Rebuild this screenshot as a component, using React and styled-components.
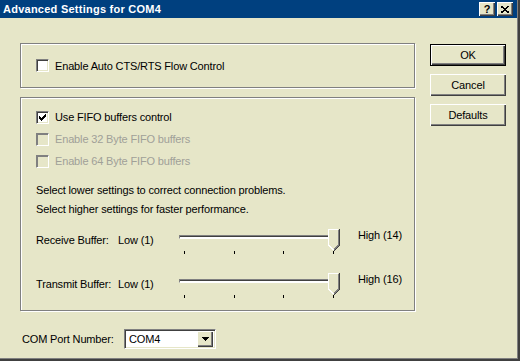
import React from "react";
import styled, { createGlobalStyle } from "styled-components";

const colors = {
  face: "#e6e6c8",
  title: "#00407f",
  shadow: "#808080",
  dark: "#404040",
  light: "#ffffff",
  text: "#000000",
  disabled: "#a0a098",
};

const GlobalStyle = createGlobalStyle`
  html, body {
    margin: 0;
    padding: 0;
    background: ${colors.face};
  }
  body {
    font-family: "Liberation Sans", Arial, sans-serif;
    font-size: 11px;
    letter-spacing: -0.15px;
    color: ${colors.text};
  }
`;

const Window = styled.div`
  width: 520px;
  height: 361px;
  box-sizing: border-box;
  background: ${colors.face};
  box-shadow: inset -2px -2px ${colors.dark}, inset -3px -3px ${colors.shadow};
  display: flex;
  flex-direction: column;
`;

const TitleBar = styled.div`
  height: 18px;
  margin-right: 3px;
  background: ${colors.title};
  display: flex;
  align-items: center;
  justify-content: space-between;
  padding: 0 4px 0 3px;
`;

const TitleText = styled.span`
  color: #fff;
  font-weight: bold;
  font-size: 11px;
  letter-spacing: 0.25px;
`;

const TitleButtons = styled.div`
  display: flex;
  gap: 2px;
`;

const TitleButton = styled.div`
  width: 16px;
  height: 14px;
  box-sizing: border-box;
  background: ${colors.face};
  box-shadow: inset 1px 1px ${colors.light}, inset -1px -1px ${colors.dark},
    inset -2px -2px ${colors.shadow};
  display: flex;
  align-items: center;
  justify-content: center;
  font-weight: bold;
  font-size: 11px;
  line-height: 1;
`;

const Body = styled.div`
  display: flex;
  padding: 25px 0 0 20px;
  gap: 15px;
`;

const LeftColumn = styled.div`
  width: 395px;
  display: flex;
  flex-direction: column;
`;

const Group = styled.div`
  box-sizing: border-box;
  border: 1px solid ${colors.shadow};
  box-shadow: inset 1px 1px ${colors.light}, 1px 1px ${colors.light};
  height: ${(p) => p.$height}px;
  margin-top: ${(p) => p.$top || 0}px;
  padding: ${(p) => p.$pad || "0 0 0 15px"};
  display: flex;
  flex-direction: column;
  justify-content: ${(p) => (p.$center ? "center" : "flex-start")};
`;

const CheckRow = styled.label`
  height: 22px;
  display: flex;
  align-items: center;
  gap: 6px;
  color: ${(p) => (p.$disabled ? colors.disabled : colors.text)};
`;

const Box = styled.span`
  width: 13px;
  height: 13px;
  box-sizing: border-box;
  background: ${(p) => (p.$disabled ? colors.face : "#fff")};
  border-top: 1px solid ${colors.shadow};
  border-left: 1px solid ${colors.shadow};
  border-right: 1px solid ${colors.light};
  border-bottom: 1px solid ${colors.light};
  box-shadow: inset 1px 1px ${(p) => (p.$disabled ? colors.shadow : colors.dark)},
    inset -1px -1px ${colors.face};
  display: flex;
  align-items: center;
  justify-content: center;
`;

const Hint = styled.div`
  line-height: 19px;
  margin-top: ${(p) => p.$top || 0}px;
`;

const SliderRow = styled.div`
  height: 30px;
  display: flex;
  align-items: flex-start;
  margin-top: ${(p) => p.$top}px;
`;

const SliderLabel = styled.span`
  width: ${(p) => p.$width}px;
  padding-top: 5px;
  line-height: 13px;
  white-space: nowrap;
`;

const HighLabel = styled.span`
  margin-left: 18px;
  line-height: 13px;
  white-space: nowrap;
`;

const SliderBox = styled.div`
  position: relative;
  width: 162px;
  height: 27px;
`;

const Track = styled.div`
  margin: 6px 3px 0 1px;
  height: 4px;
  box-sizing: border-box;
  border-top: 1px solid ${colors.shadow};
  border-left: 1px solid ${colors.shadow};
  border-bottom: 1px solid ${colors.light};
  border-right: 1px solid ${colors.light};
  background: ${colors.light};
  box-shadow: inset 0 1px ${colors.dark};
`;

const Thumb = styled.svg`
  position: absolute;
  right: 0;
  top: 0;
`;

const Ticks = styled.div`
  display: flex;
  justify-content: space-between;
  padding: 0 6px 0 6px;
  margin-top: 12px;
`;

const Tick = styled.span`
  width: 1px;
  height: 3px;
  background: ${colors.text};
`;

const PortRow = styled.div`
  display: flex;
  align-items: center;
  margin-top: 18px;
  padding-left: 2px;
`;

const PortLabel = styled.span`
  width: 102px;
`;

const Select = styled.div`
  width: 92px;
  height: 20px;
  box-sizing: border-box;
  background: #fff;
  border-top: 1px solid ${colors.shadow};
  border-left: 1px solid ${colors.shadow};
  border-right: 1px solid ${colors.light};
  border-bottom: 1px solid ${colors.light};
  box-shadow: inset 1px 1px ${colors.dark}, inset -1px -1px ${colors.face};
  display: flex;
  align-items: center;
  justify-content: space-between;
  padding: 0 2px 0 4px;
`;

const DropButton = styled.div`
  width: 16px;
  height: 16px;
  box-sizing: border-box;
  background: ${colors.face};
  box-shadow: inset 1px 1px ${colors.light}, inset -1px -1px ${colors.dark},
    inset -2px -2px ${colors.shadow};
  display: flex;
  align-items: center;
  justify-content: center;
`;

const RightColumn = styled.div`
  display: flex;
  flex-direction: column;
  gap: 8px;
  padding-top: 1px;
`;

const Button = styled.button`
  width: 76px;
  height: 22px;
  box-sizing: border-box;
  background: ${colors.face};
  font-family: inherit;
  font-size: 11px;
  letter-spacing: inherit;
  color: ${colors.text};
  padding: 0;
  border: ${(p) => (p.$default ? `1px solid ${colors.text}` : "none")};
  box-shadow: inset 1px 1px ${colors.light}, inset -1px -1px ${colors.dark},
    inset -2px -2px ${colors.shadow};
`;

const CheckMark = () => (
  <svg width="7" height="7" shapeRendering="crispEdges">
    <path d="M0 2h1v1h1v1h1V3h1V2h1V1h1V0h1v3h-1v1h-1v1h-1v1h-1v1H2V6H1V5H0z" fill="#000" />
  </svg>
);

const Check = ({ checked, disabled, children }) => (
  <CheckRow $disabled={disabled}>
    <Box $disabled={disabled}>{checked && <CheckMark />}</Box>
    {children}
  </CheckRow>
);

const ThumbShape = () => (
  <Thumb width="12" height="22" shapeRendering="crispEdges">
    <polygon points="0,0 11,0 11,16 6,21 5,21 0,16" fill={colors.face} />
    <polyline points="0.5,16 0.5,0.5 10,0.5" stroke={colors.light} fill="none" />
    <polyline points="10.5,1 10.5,16 5.5,21" stroke={colors.shadow} fill="none" />
    <polyline points="11.5,0 11.5,16.5 6,22" stroke={colors.dark} fill="none" />
    <polyline points="0.5,16 5.5,21" stroke={colors.light} fill="none" />
  </Thumb>
);

const Slider = () => (
  <SliderBox>
    <Track />
    <ThumbShape />
    <Ticks>
      <Tick />
      <Tick />
      <Tick />
      <Tick />
    </Ticks>
  </SliderBox>
);

const BufferRow = ({ label, high, top }) => (
  <SliderRow $top={top}>
    <SliderLabel $width={82}>{label}</SliderLabel>
    <SliderLabel $width={60}>Low (1)</SliderLabel>
    <Slider />
    <HighLabel>{high}</HighLabel>
  </SliderRow>
);

const App = () => {
  return (
    <Window>
      <GlobalStyle />
      <TitleBar>
        <TitleText>Advanced Settings for COM4</TitleText>
        <TitleButtons>
          <TitleButton>?</TitleButton>
          <TitleButton>
            <svg width="8" height="7" shapeRendering="crispEdges">
              <path d="M0 0l8 7M8 0l-8 7" stroke="#000" strokeWidth="1.6" />
            </svg>
          </TitleButton>
        </TitleButtons>
      </TitleBar>

      <Body>
        <LeftColumn>
          <Group $height={45} $center>
            <Check>Enable Auto CTS/RTS Flow Control</Check>
          </Group>

          <Group $height={214} $top={9} $pad="8px 0 0 15px">
            <Check checked>Use FIFO buffers control</Check>
            <Check disabled>Enable 32 Byte FIFO buffers</Check>
            <Check disabled>Enable 64 Byte FIFO buffers</Check>
            <Hint $top={9}>Select lower settings to correct connection problems.</Hint>
            <Hint>Select higher settings for faster performance.</Hint>
            <BufferRow label="Receive Buffer:" high="High (14)" top={10} />
            <BufferRow label="Transmit Buffer:" high="High (16)" top={14} />
          </Group>

          <PortRow>
            <PortLabel>COM Port Number:</PortLabel>
            <Select>
              <span>COM4</span>
              <DropButton>
                <svg width="7" height="4" shapeRendering="crispEdges">
                  <polygon points="0,0 7,0 3.5,4" fill="#000" />
                </svg>
              </DropButton>
            </Select>
          </PortRow>
        </LeftColumn>

        <RightColumn>
          <Button $default>OK</Button>
          <Button>Cancel</Button>
          <Button>Defaults</Button>
        </RightColumn>
      </Body>
    </Window>
  );
};

export default App;
